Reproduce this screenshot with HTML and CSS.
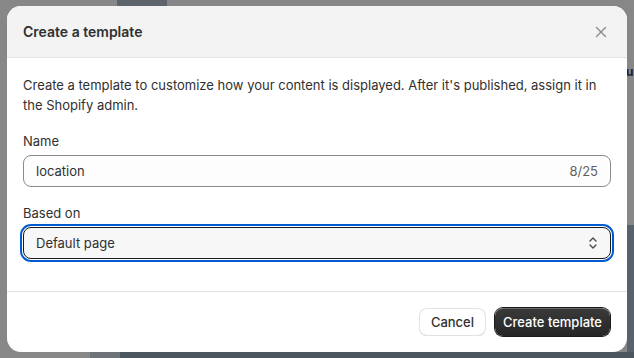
FILE: index.html
```html
<!DOCTYPE html>
<html lang="en">
<head>
    <meta charset="UTF-8">
    <meta name="viewport" content="width=device-width, initial-scale=1.0">
    <title>Create a template</title>
    <link rel="stylesheet" href="styles.css">
</head>
<body>
    <span class="backdrop-glyph">u</span>

    <div class="modal">
        <div class="modal-header">
            <h2>Create a template</h2>
            <button class="close-btn" aria-label="Close">
                <svg width="20" height="20" viewBox="0 0 20 20" fill="none" stroke="currentColor" stroke-width="1.4" stroke-linecap="round"><path d="M5.5 5.5l9 9M14.5 5.5l-9 9"/></svg>
            </button>
        </div>

        <div class="modal-body">
            <p class="intro">Create a template to customize how your content is displayed. After it's published, assign it in the Shopify admin.</p>

            <div class="field">
                <label for="name">Name</label>
                <div class="text-input">
                    <span class="value">location</span>
                    <span class="counter">8/25</span>
                </div>
            </div>

            <div class="field">
                <label for="based-on">Based on</label>
                <div class="select focused">
                    <span class="value">Default page</span>
                    <svg width="12" height="16" viewBox="0 0 12 16" fill="none" stroke="currentColor" stroke-width="1.4" stroke-linecap="round" stroke-linejoin="round"><path d="M3 6l3-3 3 3M3 10l3 3 3-3"/></svg>
                </div>
            </div>
        </div>

        <div class="modal-footer">
            <button class="btn">Cancel</button>
            <button class="btn btn-primary">Create template</button>
        </div>
    </div>
</body>
</html>
```

FILE: styles.css
```css
html, body {
    height: 100%;
}

body {
    margin: 0;
    font-family: Inter, "Noto Sans", sans-serif;
    font-size: 13px;
    color: #303030;
    overflow: hidden;
    position: relative;
    background:
        linear-gradient(#5c636b, #5c636b) 117px 0 / 50px 6px no-repeat,
        linear-gradient(#6e7379, #6e7379) 90px 352px / 30px 6px no-repeat,
        linear-gradient(#4c565f, #4c565f) 117px 352px / 517px 6px no-repeat,
        linear-gradient(#59626a, #59626a) 627px 225px / 7px 133px no-repeat,
        #878787;
}

.backdrop-glyph {
    position: absolute;
    left: 626px;
    top: 64px;
    font-size: 12px;
    font-weight: 700;
    color: #222;
}

.modal {
    position: relative;
    margin: 6px 0 0 7px;
    width: 620px;
    height: 346px;
    background: #fff;
    border-radius: 14px;
    overflow: hidden;
    display: flex;
    flex-direction: column;
}

.modal-header {
    flex-shrink: 0;
    height: 52px;
    box-sizing: border-box;
    padding: 0 16px;
    display: flex;
    align-items: center;
    justify-content: space-between;
    background: #f3f3f3;
    border-bottom: 1px solid #e3e3e3;
}

.modal-header h2 {
    margin: 0;
    font-size: 14px;
    font-weight: 600;
    color: #303030;
}

.close-btn {
    border: none;
    background: none;
    padding: 0;
    width: 20px;
    height: 20px;
    color: #8a8a8a;
    display: flex;
}

.modal-body {
    flex-shrink: 0;
    padding: 17px 16px 32px;
    display: flex;
    flex-direction: column;
    gap: 16px;
    border-bottom: 1px solid #e3e3e3;
}

.intro {
    margin: 0;
    line-height: 20px;
}

.field {
    display: flex;
    flex-direction: column;
    gap: 4px;
}

.field label {
    line-height: 20px;
}

.text-input,
.select {
    height: 32px;
    box-sizing: border-box;
    padding: 0 12px;
    border-radius: 8px;
    display: flex;
    align-items: center;
    justify-content: space-between;
}

.text-input {
    border: 1px solid #8a8a8a;
    background: #fdfdfd;
}

.counter {
    color: #616161;
}

.select {
    border: 1px solid #1a1a1a;
    background: #f7f7f7;
    color: #303030;
}

.select svg {
    color: #4a4a4a;
    margin-right: -1px;
}

.select.focused {
    outline: 2px solid #005bd3;
    outline-offset: 1px;
}

.modal-footer {
    padding: 16px 17px 16px 16px;
    display: flex;
    justify-content: flex-end;
    gap: 9px;
}

.btn {
    height: 28px;
    padding: 0 12px;
    font-family: inherit;
    font-size: 13px;
    font-weight: 500;
    color: #303030;
    background: #fff;
    border: none;
    border-radius: 8px;
    box-shadow: 0 0 0 1px #e3e3e3 inset, 0 -1px 0 0 #d4d4d4 inset;
}

.btn-primary {
    padding: 0 8px;
    color: #fff;
    background: linear-gradient(#3a3a3a, #262626);
    box-shadow: 0 0 0 1px #1a1a1a, 0 1px 0 0 rgba(255, 255, 255, 0.25) inset;
}
```
